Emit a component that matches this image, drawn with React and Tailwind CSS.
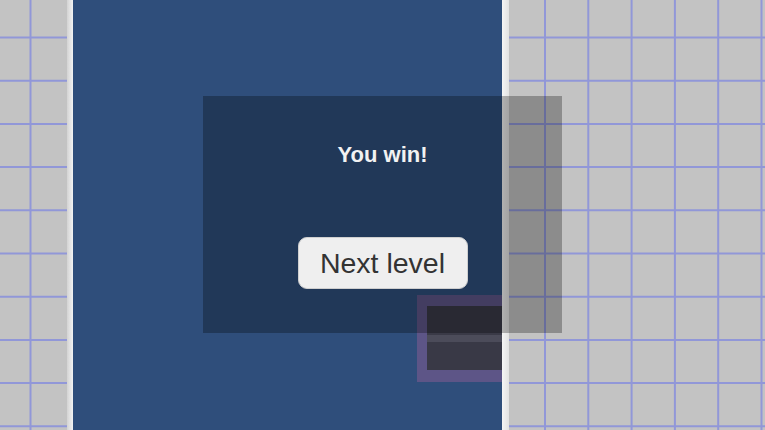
const GridArea = ({ width, offsetX }) => {
  const step = 43.3
  const vLines = []
  for (let x = offsetX; x < width + 2; x += step) vLines.push(x)
  const hLines = []
  for (let y = 37.5; y < 432; y += 43.2) hLines.push(y)

  return (
    <div className="h-full shrink-0 bg-[#c3c3c3]" style={{ width }}>
      <svg width={width} height="430" className="block">
        {vLines.map((x) => (
          <line key={'v' + x} x1={x} y1="0" x2={x} y2="430" stroke="#9197d8" strokeWidth="2" />
        ))}
        {hLines.map((y) => (
          <line key={'h' + y} x1="0" y1={y} x2={width} y2={y} stroke="#9197d8" strokeWidth="2" />
        ))}
      </svg>
    </div>
  )
}

export default function App() {
  return (
    <div className="relative flex h-[430px] w-[765px] overflow-hidden bg-[#c3c3c3]">
      <GridArea width={67} offsetX={30.5} />
      <div className="h-full w-[6px] shrink-0 bg-gradient-to-r from-[#d3d3d3] to-[#f3f3f3]" />

      {/* board */}
      <div className="relative h-full w-[429px] shrink-0 overflow-hidden bg-[#2f4e7b]">
        <div className="absolute left-[344px] top-[295px] w-[110px] border-[#5d5587] border-l-[10px] border-t-[11px] border-b-[12px]">
          <div className="h-[29px] bg-[#3a3a47]" />
          <div className="h-[7px] bg-[#4c4c5a]" />
          <div className="h-[28px] bg-[#393946]" />
        </div>
      </div>

      <div className="h-full w-[7px] shrink-0 bg-gradient-to-r from-[#f5f5f5] to-[#e2e2e2]" />
      <GridArea width={256} offsetX={36} />

      {/* win dialog */}
      <div className="absolute left-[203px] top-[96px] flex h-[237px] w-[359px] flex-col items-center bg-black/[0.28] pt-[48px]">
        <p className="text-[22px] font-bold leading-none text-[#f2f2f2] font-['Liberation_Sans',Arial,sans-serif]">
          You win!
        </p>
        <button className="mt-[71px] flex h-[52px] w-[170px] items-center justify-center rounded-[9px] border border-[#cfcfcf] bg-[#efefef] text-[28.5px] leading-none text-[#333333] font-['Liberation_Sans',Arial,sans-serif]">
          Next level
        </button>
      </div>
    </div>
  )
}
